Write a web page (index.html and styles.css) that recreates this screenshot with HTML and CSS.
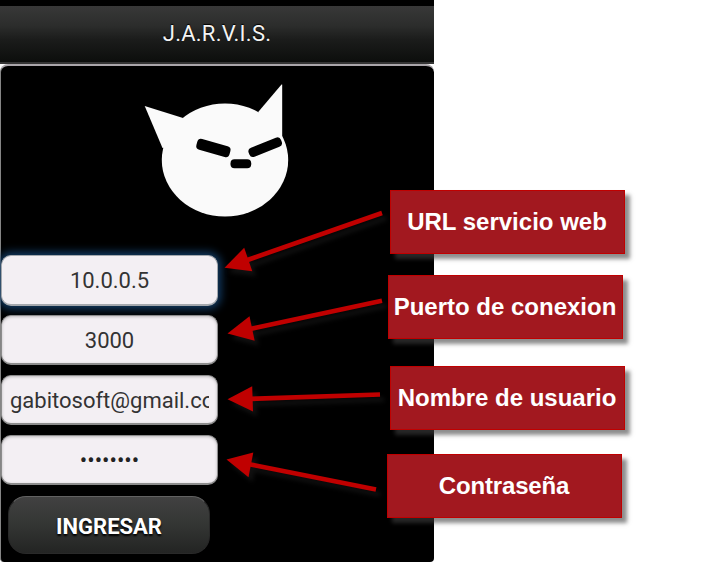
FILE: index.html
```html
<!DOCTYPE html>
<html lang="es">
<head>
<meta charset="utf-8">
<title>J.A.R.V.I.S.</title>
<link rel="stylesheet" href="styles.css">
</head>
<body>
<main class="canvas">
  <section class="phone">
    <header class="bar"><h1>J.A.R.V.I.S.</h1></header>
    <div class="panel">
      <svg class="logo" width="150" height="140" viewBox="142 81 150 140">
        <g fill="#fafafa">
          <ellipse cx="225" cy="160" rx="63.2" ry="56.5"/>
          <path d="M144.7 106L183 118L180 145L162.5 148Z"/>
          <path d="M281.5 84.5h.7V138l-7 5l-17-31Z"/>
        </g>
        <g fill="#000">
          <rect x="-17.2" y="-5.5" width="34.4" height="11" rx="4" transform="translate(213.4 148) rotate(16)"/>
          <rect x="-17.4" y="-4.8" width="34.8" height="9.6" rx="4" transform="translate(265.2 147.2) rotate(-22)"/>
          <rect x="230.5" y="159.3" width="20.7" height="9" rx="4"/>
        </g>
      </svg>
      <form class="form">
        <div class="field focused"><span>10.0.0.5</span></div>
        <div class="field"><span>3000</span></div>
        <div class="field email"><span>gabitosoft@gmail.com</span></div>
        <div class="field password"><span>••••••••</span></div>
        <button class="submit" type="button">INGRESAR</button>
      </form>
    </div>
  </section>
  <svg class="arrows" width="725" height="562" viewBox="0 0 725 562">
    <g fill="#c00000" stroke="#c00000" stroke-width="4.6">
      <path d="M382 213L246 260.5"/><path stroke="none" d="M224.5 267.7L244.2 247.8L252.3 271.3Z"/>
      <path d="M382 300.8L250 329"/><path stroke="none" d="M227.5 333.6L249.5 316.2L254.7 340.7Z"/>
      <path d="M380 394.5L250 398.9"/><path stroke="none" d="M227.5 399.3L252.2 386.3L253 411.5Z"/>
      <path d="M376 489.4L248 464"/><path stroke="none" d="M226.5 459.5L253.3 452.5L248.5 477.2Z"/>
    </g>
  </svg>
  <div class="callout url">URL servicio web</div>
  <div class="callout port">Puerto de conexion</div>
  <div class="callout user">Nombre de usuario</div>
  <div class="callout pass">Contraseña</div>
</main>
</body>
</html>
```
FILE: styles.css
```css
* { box-sizing: border-box; }
body { margin: 0; background: #fff; overflow: hidden; }
.canvas { position: relative; width: 725px; height: 562px; }
.phone {
  display: flex;
  flex-direction: column;
  width: 434px;
  height: 562px;
  font-family: Roboto, sans-serif;
}
.bar {
  height: 64px;
  flex: none;
  border-top: 6px solid #000;
  border-bottom: 2px solid #343434;
  background: linear-gradient(#383838, #2c2d2c 35%, #1b1c1b 60%, #0c0e0c);
}
.bar h1 {
  margin: 0;
  font-size: 22px;
  font-weight: 400;
  letter-spacing: .25px;
  line-height: 56px;
  text-align: center;
  color: #f4f4f4;
  text-shadow: 0 -1px 1px #000;
}
.panel {
  flex: 1;
  background: #000;
  border-top: 2px solid #aaa6aa;
  border-left: 1px solid #858585;
  border-radius: 8px 8px 4px 4px;
}
.logo { display: block; margin: 15px 0 0 141px; }
.form {
  display: flex;
  flex-direction: column;
  width: 217px;
  margin-top: 34px;
  gap: 10px;
}
.field {
  height: 50px;
  padding: 0 8px;
  border: 1px solid #8c8c8c;
  border-bottom-width: 2px;
  border-radius: 10px;
  background: #f3eff3;
  box-shadow: inset 0 1px 3px #bdbabd;
  color: #333;
  font-size: 22px;
  line-height: 49px;
  text-align: center;
}
.field span { display: block; height: 47px; overflow: hidden; white-space: nowrap; }
.field.focused {
  height: 51px;
  margin-bottom: -1px;
  border-color: #a4a8ad;
  line-height: 50px;
  box-shadow: 0 0 9px 3px #123c65;
}
.email { text-align: left; }
.password { color: #222; line-height: 50px; }
.submit {
  width: 202px;
  height: 58px;
  margin: 1px 0 0 7px;
  padding: 3px 0 0;
  border: 1px solid #292929;
  border-top-color: #626262;
  border-radius: 18px;
  background: linear-gradient(#414141, #343634 48%, #232423);
  color: #fff;
  font: 700 22px Roboto, sans-serif;
  text-shadow: 0 2px 2px #000;
}
.arrows {
  position: absolute;
  top: 0;
  left: 0;
  filter: drop-shadow(4px 5px 2px #101010);
}
.callout {
  position: absolute;
  width: 235px;
  height: 64px;
  border: 1px solid #c00000;
  background: #a2181f;
  box-shadow: 5px 5px 4px rgba(65, 65, 65, .6);
  color: #fff;
  font: 700 24px/62px "Liberation Sans", sans-serif;
  text-align: center;
  text-indent: -1px;
  white-space: nowrap;
}
.url { left: 390px; top: 190px; }
.port { left: 388px; top: 275px; }
.user { left: 390px; top: 366px; }
.pass { left: 387px; top: 454px; letter-spacing: -.15px; }
```
